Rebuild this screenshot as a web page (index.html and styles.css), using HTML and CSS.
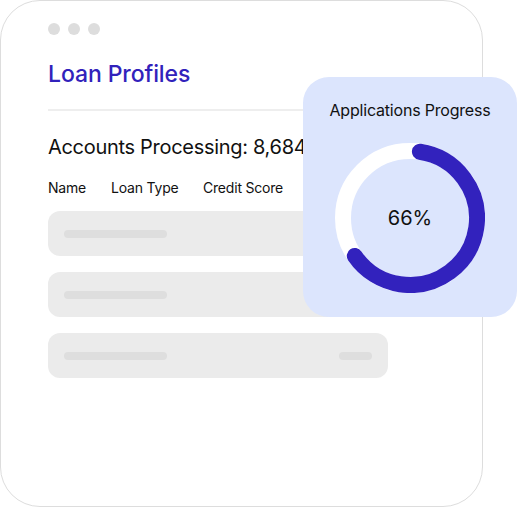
FILE: index.html
```html
<!doctype html>
<html lang="en">
<head>
<meta charset="utf-8">
<title>Loan Profiles</title>
<link rel="stylesheet" href="styles.css">
</head>
<body>

<div class="scene">
  <div class="window">
    <div class="dots">
      <span class="dot"></span>
      <span class="dot"></span>
      <span class="dot"></span>
    </div>

    <h1 class="title">Loan Profiles</h1>
    <div class="divider"></div>

    <div class="count">Accounts Processing: 8,684</div>

    <div class="columns">
      <span class="col-name">Name</span>
      <span class="col-type">Loan Type</span>
      <span>Credit Score</span>
    </div>

    <div class="rows">
      <div class="row"><span class="bar"></span></div>
      <div class="row"><span class="bar"></span></div>
      <div class="row"><span class="bar"></span><span class="bar short"></span></div>
    </div>
  </div>

  <div class="progress">
    <div class="progress-title">Applications Progress</div>
    <div class="donut">
      <svg width="150" height="150" viewBox="0 0 150 150">
        <circle cx="75" cy="75" r="67" fill="none" stroke="#ffffff" stroke-width="16"/>
        <circle cx="75" cy="75" r="67" fill="none" stroke="#3222bd" stroke-width="16"
          stroke-linecap="round" stroke-dasharray="265 421" transform="rotate(-81.5 75 75)"/>
      </svg>
      <div class="donut-value">66%</div>
    </div>
  </div>
</div>

</body>
</html>
```

FILE: styles.css
```css
* {
  box-sizing: border-box;
}

body {
  margin: 0;
  background: #ffffff;
  font-family: "Inter", "Liberation Sans", sans-serif;
  color: #111111;
}

.scene {
  position: relative;
  width: 517px;
  height: 507px;
}

.window {
  width: 483px;
  height: 507px;
  border: 1px solid #dddddd;
  border-radius: 40px;
  background: #ffffff;
  padding: 22px 47px 0 47px;
}

.dots {
  display: flex;
  gap: 8px;
}

.dot {
  width: 12px;
  height: 12px;
  border-radius: 50%;
  background: #dddddd;
}

.title {
  margin: 25px 0 0 0;
  font-size: 23px;
  font-weight: 500;
  line-height: 28px;
  color: #3122bb;
  letter-spacing: -0.1px;
}

.divider {
  height: 2px;
  background: #eeeeee;
  margin-top: 21px;
}

.count {
  margin-top: 23px;
  font-size: 20px;
  line-height: 26px;
  letter-spacing: -0.3px;
}

.columns {
  display: flex;
  margin-top: 18px;
  font-size: 14px;
  line-height: 20px;
  letter-spacing: -0.2px;
}

.col-name {
  width: 63px;
}

.col-type {
  width: 92px;
}

.rows {
  display: flex;
  flex-direction: column;
  gap: 16px;
  margin-top: 13px;
  width: 340px;
}

.row {
  height: 45px;
  border-radius: 12px;
  background: #ebebeb;
  display: flex;
  align-items: center;
  justify-content: space-between;
  padding: 0 16px;
}

.bar {
  width: 103px;
  height: 8px;
  border-radius: 4px;
  background: #dedede;
}

.bar.short {
  width: 33px;
}

.progress {
  position: absolute;
  left: 303px;
  top: 77px;
  width: 214px;
  height: 240px;
  border-radius: 26px;
  background: #dce5fd;
  display: flex;
  flex-direction: column;
  align-items: center;
  padding-top: 22px;
}

.progress-title {
  font-size: 16px;
  line-height: 22px;
  letter-spacing: -0.2px;
}

.donut {
  position: relative;
  width: 150px;
  height: 150px;
  margin-top: 22px;
}

.donut svg {
  display: block;
}

.donut-value {
  position: absolute;
  inset: 0;
  display: flex;
  align-items: center;
  justify-content: center;
  font-size: 20px;
}
```
